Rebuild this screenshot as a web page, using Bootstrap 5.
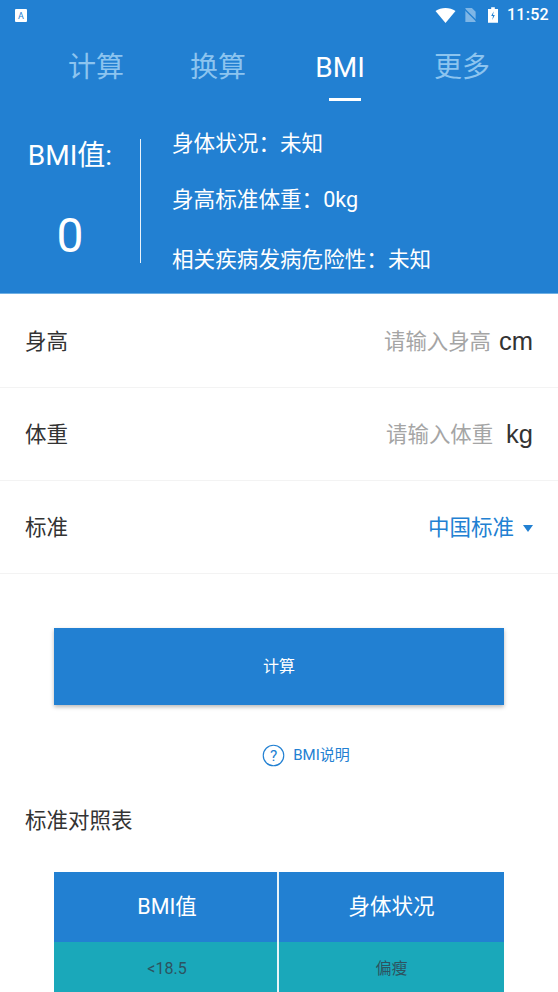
<!DOCTYPE html>
<html lang="zh">
<head>
<meta charset="utf-8">
<title>BMI</title>
<link rel="stylesheet" href="https://cdn.jsdelivr.net/npm/bootstrap@5.3.0/dist/css/bootstrap.min.css">
<style>
html,body{height:992px;overflow:hidden}
body{font-family:Roboto,"Noto Sans CJK SC",sans-serif;background:#fff;color:#333}
.hero{background:#2280d2;height:294px;color:#fff;border-bottom:1px solid #6fb0e4}
.statusbar{height:30px;padding:0 9px 0 15px}
.statusbar .clock{font-size:16px;font-weight:500;line-height:30px;letter-spacing:.3px;margin-left:9px}
.tabbar{padding:0 35px;height:71px}
.tabitem{width:122px;text-align:center;font-size:28px;line-height:1;color:#8cc4ef;padding-top:24px;position:relative}
.tabitem.on{color:#fff}
.tabitem.on::after{content:"";position:absolute;left:50px;top:68px;width:32px;height:3px;background:#fff}
.summary{height:140px;margin-top:29px}
.bmibox{width:140px;text-align:center;height:124px;margin-top:9px;flex:none}
.bmibox .lbl{font-size:28px;line-height:34px}
.bmibox .num{font-size:48px;line-height:50px;margin-top:38px}
.vrule{width:1px;height:124px;background:#e8f2fb;margin-top:9px;flex:none}
.facts{padding-left:31px;font-size:21.600px;line-height:30px}
.facts div:nth-child(1){margin-top:-1px}
.facts div:nth-child(2){margin-top:26px}
.facts div:nth-child(3){margin-top:30px}
.formlist{padding-top:1px}
.formrow{height:93px;border-bottom:1px solid #f3f3f3;padding:2px 25px 0;font-size:21.500px;color:#333}
.hint{color:#a5a5a5;font-size:21.400px}
.unit{font-size:25.500px;color:#333;margin-left:8px;font-family:"Liberation Sans",sans-serif;line-height:1}
.unit2{margin-left:13px}
.pick{color:#2280d2}
.caret{width:0;height:0;border-left:5.500px solid transparent;border-right:5.500px solid transparent;border-top:7px solid #2280d2;margin-left:9px}
.calc{width:450px;height:77px;margin:54px auto 0;background:#2280d2;color:#fff;font-size:16px;border-radius:0;border:0;display:block;box-shadow:0 2px 4px rgba(0,0,0,.28)}
.calc:hover{background:#2280d2;color:#fff}
.helprow{margin-top:38px;height:24px;color:#2280d2;font-size:15px;padding-left:54px}
.helprow svg{margin-right:8px}
.tabletitle{font-size:21.500px;line-height:30px;padding-left:25px;margin-top:39px;color:#333}
.refgrid{width:450px;margin:36px auto 0}
.cella{width:223px;text-align:center;flex:none;padding-left:3px}
.cellc{flex:1;text-align:center;border-left:2px solid #e8f4f8}
.rowh>div{height:70px;line-height:70px;background:#2280d2;color:#fff;font-size:21.500px}
.rowb>div{height:54px;line-height:54px;background:#1aa8ba;color:#2d5360;font-size:16px}
</style>
</head>
<body>
<div class="hero">
  <div class="statusbar d-flex align-items-center">
    <svg width="12" height="13" viewBox="0 0 12 13"><rect width="12" height="13" rx="1" fill="#fff"/><text x="6" y="10" font-size="9" text-anchor="middle" fill="#2280d2" font-family="Roboto">A</text></svg>
    <div class="ms-auto d-flex align-items-center">
      <svg width="21" height="15" viewBox="0 0 20 15"><path d="M0 3C5.500-1 14.500-1 20 3L10 15Z" fill="#fff"/></svg>
      <svg class="ms-2" width="13" height="14" viewBox="0 0 13 15"><path d="M1 0h7l4 4v11H1z" fill="#7fb6e6"/><path d="M0 1l13 13" stroke="#2280d2" stroke-width="1.500"/></svg>
      <svg width="10" height="16" viewBox="0 0 11 17" style="margin-left:11px"><path d="M3.500 0h4v2H11v15H0V2h3.500z" fill="#fff"/><path d="M6.300 4.500 3.500 9.500h2L4.700 14 7.500 8.500h-2z" fill="#2280d2"/></svg>
      <span class="clock">11:52</span>
    </div>
  </div>
  <div class="tabbar d-flex">
    <div class="tabitem">计算</div>
    <div class="tabitem">换算</div>
    <div class="tabitem on">BMI</div>
    <div class="tabitem">更多</div>
  </div>
  <div class="summary d-flex">
    <div class="bmibox">
      <div class="lbl">BMI值:</div>
      <div class="num">0</div>
    </div>
    <div class="vrule"></div>
    <div class="facts">
      <div>身体状况：未知</div>
      <div>身高标准体重：0kg</div>
      <div>相关疾病发病危险性：未知</div>
    </div>
  </div>
</div>
<div class="formlist">
<div class="formrow d-flex align-items-center"><span>身高</span><span class="hint ms-auto">请输入身高</span><span class="unit">cm</span></div>
<div class="formrow d-flex align-items-center"><span>体重</span><span class="hint ms-auto">请输入体重</span><span class="unit unit2">kg</span></div>
<div class="formrow d-flex align-items-center"><span>标准</span><span class="pick ms-auto">中国标准</span><span class="caret"></span></div>
</div>
<button type="button" class="btn calc">计算</button>
<div class="helprow d-flex align-items-center justify-content-center">
  <svg width="23" height="23" viewBox="0 0 24 24" fill="none"><circle cx="12" cy="12" r="10.700" stroke="#2280d2" stroke-width="1.200"/><text x="12" y="18" font-size="16" text-anchor="middle" fill="#2280d2" font-family="Roboto">?</text></svg>
  <span>BMI说明</span>
</div>
<div class="tabletitle">标准对照表</div>
<div class="refgrid">
  <div class="d-flex rowh"><div class="cella">BMI值</div><div class="cellc">身体状况</div></div>
  <div class="d-flex rowb"><div class="cella">&lt;18.5</div><div class="cellc">偏瘦</div></div>
</div>
<script src="https://cdn.jsdelivr.net/npm/bootstrap@5.3.0/dist/js/bootstrap.bundle.min.js"></script>
</body>
</html>
